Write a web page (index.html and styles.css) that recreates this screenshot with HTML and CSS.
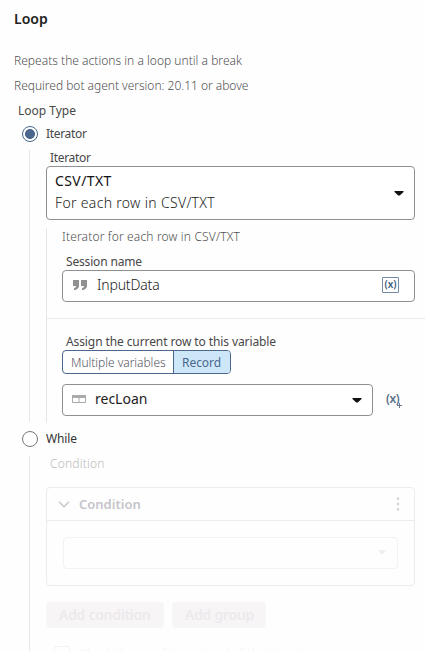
FILE: index.html
```html
<!DOCTYPE html>
<html lang="en">
<head>
<meta charset="utf-8">
<title>Loop</title>
<link rel="stylesheet" href="styles.css">
</head>
<body>
<main class="panel">
  <h1 class="title">Loop</h1>
  <p class="desc summary">Repeats the actions in a loop until a break</p>
  <p class="desc version">Required bot agent version: 20.11 or above</p>
  <div class="type-label">Loop Type</div>
  <div class="option"><i class="radio on"></i><span class="narrow">Iterator</span></div>
  <section class="branch">
    <div class="label narrow">Iterator</div>
    <div class="select tall">
      <div class="choice"><div class="strong">CSV/TXT</div><div>For each row in CSV/TXT</div></div>
      <svg width="10" height="5" viewBox="0 0 10 5"><path d="M.5 0h9v1L5.800 4.600H4.200L.5 1z" fill="#111"/></svg>
    </div>
    <div class="details">
      <div class="group first">
        <div class="hint">Iterator for each row in CSV/TXT</div>
        <div class="label session-label">Session name</div>
        <div class="select session">
          <svg width="16" height="11" viewBox="0 0 16 11"><path d="M0 0h6v5.500C6 8 4 10 1 10V8c1.500 0 2-1 2-2H0zM8 0h6v5.500C14 8 12 10 9 10V8c1.500 0 2-1 2-2H8z" fill="#909090"/></svg>
          <span class="value">InputData</span>
          <span class="var-box">(x)</span>
        </div>
      </div>
      <div class="group second">
        <div class="label assign-label">Assign the current row to this variable</div>
        <div class="toggle"><span class="tab">Multiple variables</span><span class="tab active">Record</span></div>
        <div class="record-row">
          <div class="select record">
            <svg width="14" height="8" viewBox="0 0 14 8"><path d="M.5 .5h13v7H.5zM7 3v4" fill="none" stroke="#aaa"/><path d="M0 0h14v3H0z" fill="#aaa"/></svg>
            <span class="value rec">recLoan</span>
            <svg width="10" height="5" viewBox="0 0 10 5"><path d="M.5 0h9v1L5.800 4.600H4.200L.5 1z" fill="#111"/></svg>
          </div>
          <span class="var-add">(x)<svg width="5" height="5" viewBox="0 0 5 5"><path d="M2.500 0v5M0 2.500h5" stroke="#6b7890"/></svg></span>
        </div>
      </div>
    </div>
  </section>
  <div class="option while"><i class="radio"></i><span>While</span></div>
  <section class="branch lower">
    <div class="label faded">Condition</div>
    <div class="card">
      <div class="card-head">
        <svg width="12" height="7" viewBox="0 0 12 7"><path d="M1 .8l5 5 5-5" fill="none" stroke="#c8c8cc" stroke-width="1.500"/></svg>
        <span class="card-title">Condition</span>
        <svg width="4" height="14" viewBox="0 0 4 14"><path d="M.8 .5h2.400v2.400H.8zM.8 5.800h2.400v2.400H.8zM.8 11.100h2.400v2.400H.8z" fill="#d4d4da"/></svg>
      </div>
      <div class="card-field"><svg width="10" height="5" viewBox="0 0 10 5"><path d="M1 0h8L5.800 4H4.200z" fill="#efeff1"/></svg></div>
    </div>
    <div class="buttons"><span class="btn b1">Add condition</span><span class="btn b2">Add group</span></div>
    <div class="check"><i></i><span>Check the condition at end of the iteration</span></div>
  </section>
</main>
</body>
</html>
```
FILE: styles.css
```css
* { box-sizing: border-box; }
html, body { margin: 0; height: 651px; overflow: hidden; background: #fefefe; }
body { font: 12px/16px "Noto Sans", "Open Sans", sans-serif; color: #484848; white-space: nowrap; }
h1, p { margin: 0; }
svg { display: block; flex: none; }
.panel { width: 425px; height: 651px; overflow: hidden; padding-top: 9px; }
.title { padding-left: 14px; height: 39px; font-size: 14px; line-height: 20px; font-weight: 600; color: #222; }
.desc { padding-left: 14px; height: 25px; line-height: 25px; font-weight: 300; color: #505050; }
.summary { letter-spacing: .02px; }
.version { letter-spacing: -.02px; }
.type-label { padding-left: 18px; height: 25px; line-height: 26px; }
.option { display: flex; align-items: center; height: 18px; padding-left: 22px; gap: 8px; margin-top: 2px; }
.narrow { letter-spacing: -.33px; }
.radio { display: block; flex: none; width: 16px; height: 16px; border: 1px solid #777; border-radius: 50%; background: #fff; }
.radio.on { border-color: #4a678d; background: radial-gradient(circle, #4a678d 4.600px, #fff 5.300px); }
.branch { margin: 7px 0 0 29px; border-left: 1px solid #e7e7e9; padding-left: 16px; height: 272px; }
.label { height: 16px; padding-left: 4px; line-height: 15px; }
.session-label { letter-spacing: -.17px; }
.assign-label { letter-spacing: -.1px; }
.select { display: flex; align-items: center; background: #fff; border: 1px solid #909090; border-radius: 4px; color: #222; font-size: 14px; }
.tall { width: 369px; height: 54px; padding: 0 10px 0 8px; line-height: 22px; justify-content: space-between; font-weight: 300; letter-spacing: .32px; }
.choice { padding-bottom: 2px; }
.strong { font-weight: 400; color: #111; letter-spacing: .4px; }
.details { margin-top: 8px; height: 195px; border-left: 1px solid #e7e7e9; }
.group { padding-left: 15px; }
.first { height: 91px; border-bottom: 1px solid #eaeaec; }
.hint { height: 26px; line-height: 18px; font-weight: 300; color: #505050; letter-spacing: .16px; }
.session { width: 353px; height: 32px; padding: 0 15px 2px 10px; }
.session .value { font-weight: 300; letter-spacing: -.15px; }
.value { flex: 1; padding-left: 8px; }
.var-box { width: 17px; height: 16px; border: 1px solid #7489a5; border-radius: 1px; font-size: 10px; line-height: 13px; text-align: center; color: #405b7d; font-weight: 600; }
.second { padding-top: 15px; }
.toggle { display: flex; width: 169px; height: 24px; border: 1px solid #4a678d; border-radius: 4px; overflow: hidden; line-height: 23px; }
.tab { width: 110px; flex: none; padding-left: 8px; color: #555563; font-weight: 300; letter-spacing: -.04px; }
.tab.active { width: 57px; border-left: 1px solid #4a678d; background: #cde7f8; color: #4a678d; font-weight: 400; }
.record-row { display: flex; align-items: center; margin-top: 10px; }
.record { width: 311px; height: 32px; padding: 0 10px 0 9px; }
.record > svg:first-child { margin-bottom: 2px; }
.rec { padding: 0 0 2px 9px; }
.var-add { position: relative; margin-left: 13px; font-size: 12px; font-weight: 600; letter-spacing: -.4px; color: #5b6f8a; line-height: 16px; padding-bottom: 3px; }
.var-add svg { position: absolute; left: 11px; top: 12px; }
.while { margin-top: 8px; color: #333; letter-spacing: -.15px; }
.lower { height: 195px; margin-top: 8px; }
.faded { color: #bbb; font-weight: 300; height: 31px; letter-spacing: .2px; }
.card { width: 369px; height: 99px; border: 1px solid #ececee; border-radius: 4px; }
.card-head { display: flex; align-items: center; height: 33px; border-bottom: 1px solid #ececee; padding: 0 14px 0 11px; }
.card-title { flex: 1; padding-left: 9px; font-size: 13px; font-weight: 600; color: #c5c5ca; }
.card-field { display: flex; align-items: center; justify-content: flex-end; width: 335px; height: 32px; margin: 16px 0 0 16px; border: 1px solid #f2f2f4; border-radius: 4px; padding: 0 10px 2px 0; }
.buttons { display: flex; gap: 8px; margin-top: 16px; font-size: 14px; line-height: 26px; font-weight: 600; color: #eee9ed; }
.btn { height: 26px; background: #f8f5f7; border-radius: 4px; padding-left: 13px; letter-spacing: -.28px; }
.b1 { width: 118px; }
.b2 { width: 94px; }
.check { display: flex; gap: 9px; margin: 18px 0 0 8px; color: #f6f6f6; }
.check i { width: 16px; height: 16px; border: 1px solid #f3f3f3; border-radius: 2px; }
```
